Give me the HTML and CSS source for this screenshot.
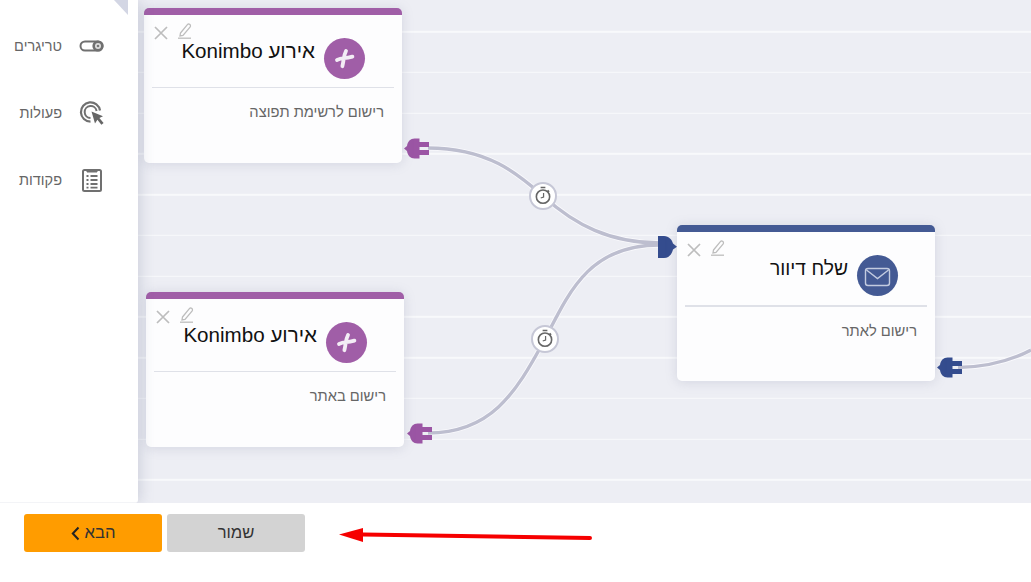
FILE: index.html
```html
<!DOCTYPE html>
<html lang="he">
<head>
<meta charset="utf-8">
<title>Automation</title>
<link rel="stylesheet" href="styles.css">
</head>
<body>
<svg class="defs" width="0" height="0" aria-hidden="true">
  <symbol id="plug" viewBox="0 0 26 21">
    <path d="M0 10.5 L3 8 C3.5 3.5 6.5 .5 10.5 .5 H15.5 V4 H25 V9 H15.5 V12 H25 V17 H15.5 V20.5 H10.5 C6.5 20.5 3.5 17.5 3 13 Z" fill="currentColor"/>
  </symbol>
  <symbol id="watch" viewBox="0 0 20 20">
    <g fill="none" stroke="currentColor" stroke-width="1.7">
      <circle cx="10" cy="11.2" r="7"/>
      <path d="M7.5 1.6 H12.5 M14.8 4.6 L16.4 6.2"/>
      <path d="M10.6 7.4 V11.6 L7.6 12.6" stroke-width="1.3"/>
    </g>
  </symbol>
  <symbol id="close" viewBox="0 0 14 14">
    <path d="M1 1 L13 13 M13 1 L1 13" stroke="currentColor" stroke-width="1.7" fill="none"/>
  </symbol>
  <symbol id="pencil" viewBox="0 0 14 16">
    <path d="M2.5 10 L9.6 1.4 C10.4 .6 12 1.2 12.4 2.2 C12.7 3 12.4 3.6 12 4.2 L5 12.4 L2 13 Z" fill="none" stroke="currentColor" stroke-width="1.3"/>
    <path d="M0 15.2 H13" stroke="currentColor" stroke-width="1.3"/>
  </symbol>
  <symbol id="add" viewBox="0 0 41 41">
    <path d="M22 13 C20.8 15.5 20.2 17.8 19.8 20.2 C17.4 20.5 15.4 21 13 22 M19.8 20.2 C22.6 20 25.2 19.6 28.4 18.6 M19.8 20.2 C19.4 23 19 25.5 18.4 28.2" fill="none" stroke="#f3edf5" stroke-width="3.8" stroke-linecap="round"/>
  </symbol>
</svg>

<main class="canvas">
  <aside class="sidebar">
    <span class="corner"></span>
    <div class="tool">
      <svg class="tool-icon" viewBox="0 0 26 26">
        <rect x="1.5" y="8.5" width="22" height="9" rx="4.5" fill="none" stroke="#707070" stroke-width="2"/>
        <circle cx="19" cy="13" r="5.6" fill="#707070"/>
        <circle cx="19" cy="13" r="3" fill="#ddd"/>
        <circle cx="19" cy="13" r="1.3" fill="#777"/>
      </svg>
      <span>טריגרים</span>
    </div>
    <div class="tool">
      <svg class="tool-icon" viewBox="0 0 26 26">
        <path d="M21 10.5 A9.6 9.6 0 1 0 11.5 21.6" fill="none" stroke="#707070" stroke-width="2.2"/>
        <path d="M17.6 11 A6 6 0 1 0 11.5 18" fill="none" stroke="#707070" stroke-width="2"/>
        <path d="M12.5 11.5 L24 16.2 L20.4 18 L24.6 23 L22.4 24.8 L18.4 19.8 L16 23.4 Z" fill="#666"/>
      </svg>
      <span>פעולות</span>
    </div>
    <div class="tool">
      <svg class="tool-icon" viewBox="0 0 26 26">
        <rect x="4" y="3" width="18" height="21" rx="1.5" fill="none" stroke="#707070" stroke-width="2"/>
        <path d="M8 2.5 V5 H18 V2.5" fill="#707070" stroke="#707070" stroke-width="1"/>
        <path d="M7.5 9 H9.5 M11.5 9 H18.5 M7.5 13 H9.5 M11.5 13 H18.5 M7.5 17 H9.5 M11.5 17 H18.5 M7.5 20.6 H9.5 M11.5 20.6 H18.5" stroke="#707070" stroke-width="1.8" fill="none"/>
      </svg>
      <span>פקודות</span>
    </div>
  </aside>

  <svg class="edges" viewBox="0 0 1031 503">
    <g class="edge-halo">
      <path d="M428 148 C490 148 520 176 543 196 C575 225 610 243 660 243"/>
      <path d="M428 433 C490 433 515 395 545 339 C570 290 590 245 660 245"/>
      <path d="M958 367.5 C985 367 1010 361 1031 350"/>
    </g>
    <g class="edge">
      <path d="M428 148 C490 148 520 176 543 196 C575 225 610 243 660 243"/>
      <path d="M428 433 C490 433 515 395 545 339 C570 290 590 245 660 245"/>
      <path d="M958 367.5 C985 367 1010 361 1031 350"/>
    </g>
    <use href="#plug" x="404" y="138" width="26" height="21" class="violet"/>
    <use href="#plug" x="407" y="423" width="26" height="21" class="violet"/>
    <use href="#plug" x="937" y="357" width="26" height="21" class="navy"/>
    <path class="navy-fill" d="M658 236 H664 C669 236 672 240 673 243.5 L677 246.8 L673 249.5 C672 254 669 258 664 258 H658 Z"/>
    <g class="timer">
      <circle cx="543" cy="196" r="13"/>
      <use href="#watch" x="533.5" y="186" width="19" height="19"/>
    </g>
    <g class="timer">
      <circle cx="545" cy="339" r="13"/>
      <use href="#watch" x="535.5" y="329" width="19" height="19"/>
    </g>
  </svg>

  <article class="node violet-node node-a">
    <div class="node-tools">
      <svg class="tool-x"><use href="#close"/></svg>
      <svg class="tool-pen"><use href="#pencil"/></svg>
    </div>
    <div class="node-head">
      <span class="badge"><svg width="41" height="41"><use href="#add"/></svg></span>
      <h2 class="title">אירוע Konimbo</h2>
    </div>
    <p class="sub">רישום לרשימת תפוצה</p>
  </article>

  <article class="node violet-node node-b">
    <div class="node-tools">
      <svg class="tool-x"><use href="#close"/></svg>
      <svg class="tool-pen"><use href="#pencil"/></svg>
    </div>
    <div class="node-head">
      <span class="badge"><svg width="41" height="41"><use href="#add"/></svg></span>
      <h2 class="title">אירוע Konimbo</h2>
    </div>
    <p class="sub">רישום באתר</p>
  </article>

  <article class="node navy-node node-c">
    <div class="node-tools">
      <svg class="tool-x"><use href="#close"/></svg>
      <svg class="tool-pen"><use href="#pencil"/></svg>
    </div>
    <div class="node-head">
      <span class="badge">
        <svg width="41" height="41" viewBox="0 0 41 41">
          <rect x="8.5" y="13.5" width="24" height="17" rx="2.5" fill="none" stroke="#c3cbe0" stroke-width="1.4"/>
          <path d="M9.5 15 L20.5 23.5 L31.5 15" fill="none" stroke="#c3cbe0" stroke-width="1.4"/>
        </svg>
      </span>
      <h2 class="title">שלח דיוור</h2>
    </div>
    <p class="sub">רישום לאתר</p>
  </article>
</main>

<footer class="footer">
  <button class="btn btn-next" type="button">
    <svg class="chev" viewBox="0 0 9 15"><path d="M7.5 1.5 L1.8 7.5 L7.5 13.5" fill="none" stroke="#222" stroke-width="2"/></svg>
    <span>הבא</span>
  </button>
  <button class="btn btn-save" type="button">שמור</button>
  <svg class="annot" viewBox="0 0 260 20" width="260" height="20">
    <path d="M24 7.5 L251 11" stroke="#f60000" stroke-width="4" stroke-linecap="round"/>
    <path d="M0 7.5 L24 1 L24 15 Z" fill="#f60000"/>
  </svg>
</footer>
</body>
</html>
```

FILE: styles.css
```css
* { box-sizing: border-box; }

html, body {
  margin: 0;
  height: 100%;
}

body {
  display: flex;
  flex-direction: column;
  width: 1031px;
  height: 582px;
  overflow: hidden;
  background: #fff;
  font-family: "Liberation Sans", "Open Sans", sans-serif;
}

.defs { position: absolute; }

.canvas {
  position: relative;
  height: 503px;
  flex: none;
  overflow: hidden;
  background-color: #edeef4;
  background-image: repeating-linear-gradient(
    to bottom,
    transparent 0,
    transparent 39px,
    #f8f9fb 39px,
    #f8f9fb 40.75px
  );
  background-position: 0 -8.2px;
}

.sidebar {
  position: relative;
  z-index: 3;
  width: 138px;
  height: 503px;
  padding-top: 12px;
  background: #fff;
  border-bottom: 1px solid #f3f4f7;
  border-radius: 0 0 3px 0;
  box-shadow: 2px 0 14px rgba(120, 125, 155, .28);
}

.corner {
  position: absolute;
  top: 0;
  right: 10px;
  width: 14px;
  height: 15px;
  background: #d3d6e4;
  clip-path: polygon(0 0, 100% 0, 100% 100%);
}

.tool {
  display: flex;
  align-items: center;
  justify-content: flex-start;
  direction: rtl;
  gap: 17px;
  height: 67px;
  padding-right: 33px;
  font-size: 14.5px;
  color: #666;
}

.tool-icon {
  width: 26px;
  height: 26px;
  flex: none;
}

.edges {
  position: absolute;
  inset: 0;
  width: 1031px;
  height: 503px;
}

.edge-halo path,
.edge path {
  fill: none;
}

.edge-halo path {
  stroke: #fafafd;
  stroke-width: 5px;
}

.edge path {
  stroke: #bdbecf;
  stroke-width: 3.4px;
}

.violet { color: #9b55a4; }
.navy { color: #344c8e; }
.navy-fill { fill: #344c8e; }

.timer circle {
  fill: #fff;
  stroke: #c6c7d6;
  stroke-width: 2px;
}

.timer use { color: #666; }

.node {
  position: absolute;
  z-index: 2;
  width: 258px;
  height: 155px;
  background: #fdfdfe;
  border-top: 7px solid;
  border-radius: 5px;
  box-shadow: 0 1px 12px rgba(120, 125, 155, .22);
}

.violet-node { border-top-color: #a05ea7; }
.navy-node { border-top-color: #445a94; }

.node-a { left: 144px; top: 8px; }
.node-b { left: 146px; top: 292px; }
.node-c { left: 677px; top: 225px; height: 156px; }

.node-tools {
  position: absolute;
  top: 8px;
  left: 10px;
  display: flex;
  align-items: flex-start;
  gap: 10px;
  color: #bdbdbd;
}

.tool-x {
  width: 14px;
  height: 14px;
  margin-top: 3px;
}

.tool-pen {
  width: 14px;
  height: 16px;
}

.node-head {
  display: flex;
  align-items: center;
  direction: rtl;
  gap: 9px;
  height: 73px;
  margin: 0 8px;
  padding-top: 14px;
  padding-right: 29px;
  border-bottom: 1.5px solid #dfe1e8;
}

.navy-node .node-head {
  height: 75px;
  padding-top: 13px;
  border-bottom-width: 2px;
}

.badge {
  display: block;
  width: 41px;
  height: 41px;
  flex: none;
  border-radius: 50%;
  background: #a05ea7;
}

.navy-node .badge { background: #445a94; }

.badge svg { display: block; }

.title {
  margin: 0 0 14px;
  font-size: 20.6px;
  font-weight: 400;
  color: #111;
  white-space: nowrap;
}

.navy-node .title {
  margin-bottom: 12px;
  font-size: 19.3px;
}

.sub {
  margin: 16px 18px 0 0;
  direction: rtl;
  font-size: 14.7px;
  color: #666;
}

.footer {
  position: relative;
  display: flex;
  align-items: flex-start;
  gap: 5px;
  flex: 1;
  padding: 11px 24px 0;
  background: #fff;
}

.btn {
  display: flex;
  align-items: center;
  justify-content: center;
  gap: 5px;
  width: 138px;
  height: 38px;
  border: 0;
  border-radius: 3px;
  direction: ltr;
  font: 400 16.6px "Liberation Sans", "Open Sans", sans-serif;
  color: #333;
}

.btn-next { background: #ff9c00; }
.btn-save { background: #d3d3d3; }

.chev {
  width: 9px;
  height: 15px;
}

.annot {
  position: absolute;
  left: 339px;
  top: 24px;
}
```
